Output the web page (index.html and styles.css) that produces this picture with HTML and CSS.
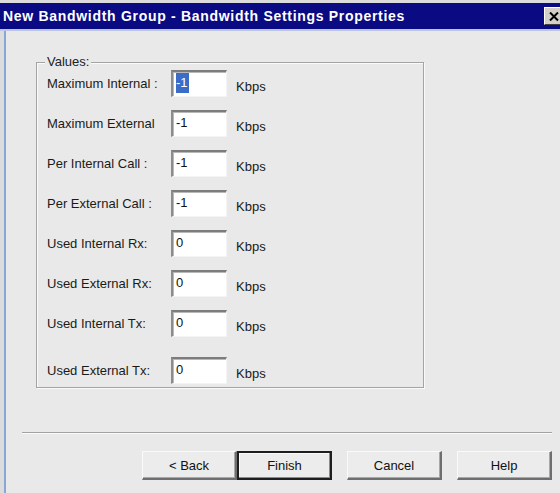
FILE: index.html
```html
<!DOCTYPE html>
<html>
<head>
<meta charset="utf-8">
<title>Bandwidth Settings Properties</title>
<link rel="stylesheet" href="styles.css">
</head>
<body>
<div class="window">
  <div class="titlebar">
    <span class="title">New Bandwidth Group - Bandwidth Settings Properties</span>
    <span class="close">
      <svg width="10" height="9" viewBox="0 0 10 9"><path d="M1 0.5 L9 8.5 M9 0.5 L1 8.5" stroke="#000" stroke-width="2" fill="none"/></svg>
    </span>
  </div>
  <div class="frame">
    <fieldset class="group">
      <legend>Values:</legend>
      <div class="rows">
        <div class="row"><span class="label">Maximum Internal :</span><span class="field"><span class="sel">-1</span></span><span class="unit">Kbps</span></div>
        <div class="row"><span class="label">Maximum External</span><span class="field">-1</span><span class="unit">Kbps</span></div>
        <div class="row"><span class="label">Per Internal Call :</span><span class="field">-1</span><span class="unit">Kbps</span></div>
        <div class="row"><span class="label">Per External Call :</span><span class="field">-1</span><span class="unit">Kbps</span></div>
        <div class="row"><span class="label">Used Internal Rx:</span><span class="field">0</span><span class="unit">Kbps</span></div>
        <div class="row"><span class="label">Used External Rx:</span><span class="field">0</span><span class="unit">Kbps</span></div>
        <div class="row"><span class="label">Used Internal Tx:</span><span class="field">0</span><span class="unit">Kbps</span></div>
        <div class="row row-last"><span class="label">Used External Tx:</span><span class="field">0</span><span class="unit">Kbps</span></div>
      </div>
    </fieldset>
    <div class="separator"></div>
    <div class="buttons">
      <button class="btn">&lt; Back</button>
      <button class="btn btn-default">Finish</button>
      <button class="btn btn-gap">Cancel</button>
      <button class="btn btn-gap">Help</button>
    </div>
  </div>
</div>
</body>
</html>
```

FILE: styles.css
```css
html, body {
  margin: 0;
  padding: 0;
}

body {
  width: 560px;
  height: 493px;
  overflow: hidden;
  background: #e9e9e9;
  font-family: "Liberation Sans", Arial, sans-serif;
  font-size: 13px;
  color: #000;
}

.window {
  height: 493px;
  display: flex;
  flex-direction: column;
  background: #dcdcdc;
}

/* caption bar */
.titlebar {
  margin-top: 3px;
  height: 26px;
  background: #0a0a82;
  border-bottom: 2px solid #bcc6de;
  display: flex;
  align-items: center;
  padding-left: 3px;
  color: #fff;
  font-weight: bold;
  font-size: 14px;
  letter-spacing: 0.7px;
  white-space: nowrap;
}

.close {
  margin-left: auto;
  margin-right: -3px;
  width: 18px;
  height: 16px;
  background: #d4d0c8;
  border-top: 1px solid #fff;
  border-left: 1px solid #fff;
  border-bottom: 1px solid #404040;
  display: flex;
  align-items: center;
  justify-content: center;
}

/* client area */
.frame {
  flex: 1;
  margin-left: 4px;
  border-left: 2px solid #89a6d6;
  background: #e9e9e9;
  display: flex;
  flex-direction: column;
}

.group {
  margin: 24px 0 0 30px;
  width: 388px;
  padding: 1px 0 3px 10px;
  border: 1px solid #a4a4a4;
  box-shadow: inset 1px 1px 0 #fafafa, 1px 1px 0 #fafafa;
  box-sizing: border-box;
  min-width: 0;
}

.group legend {
  margin-left: -2px;
  padding: 0 2px;
  line-height: 14px;
  background: #e9e9e9;
  color: #222;
}

.rows {
  display: flex;
  flex-direction: column;
  gap: 13px;
}

.row {
  display: flex;
  align-items: center;
  height: 27px;
}

.row-last {
  margin-top: 7px;
}

.label {
  width: 124px;
  color: #1a1a1a;
  white-space: nowrap;
}

.field {
  box-sizing: border-box;
  width: 56px;
  height: 27px;
  background: #fff;
  border-style: solid;
  border-width: 2px 1px 1px 2px;
  border-color: #7c7c7c #f4f4f4 #f4f4f4 #8c8c8c;
  box-shadow: inset 1px 1px 0 #b8b8b8;
  padding-left: 3px;
  line-height: 22px;
  color: #111;
}

.sel {
  background: #3a6cc8;
  color: #fff;
  padding: 2px 1px 3px 0;
}

.unit {
  margin-left: 9px;
  padding-top: 6px;
  color: #1a1a1a;
}

.separator {
  margin: 44px 0 0 16px;
  width: 530px;
  border-top: 1px solid #a2a2a2;
  border-bottom: 1px solid #fbfbfb;
}

.buttons {
  display: flex;
  margin: 17px 0 0 136px;
}

.btn {
  box-sizing: border-box;
  width: 95px;
  height: 29px;
  padding: 0;
  background: #ececec;
  font-family: "Liberation Sans", Arial, sans-serif;
  font-size: 13px;
  color: #111;
  border-style: solid;
  border-width: 1px 2px 2px 1px;
  border-color: #fafafa #6e6e6e #6e6e6e #fafafa;
  box-shadow: inset -1px -1px 0 #a8a8a8;
}

.btn-default {
  border: 2px solid #1e1e1e;
  box-shadow: inset -1px -1px 0 #8a8a8a, inset 1px 1px 0 #fafafa;
}

.btn-gap {
  margin-left: 15px;
}
```
